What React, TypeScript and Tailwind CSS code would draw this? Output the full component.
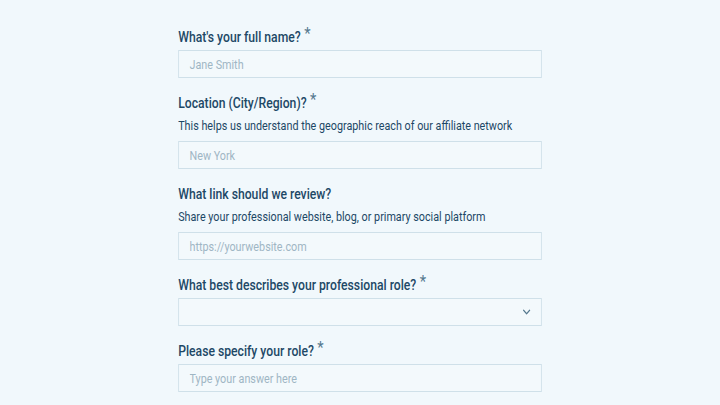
import { useState } from "react";

type Field = {
  id: string;
  label: string;
  required: boolean;
  hint?: string;
  placeholder?: string;
  kind: "text" | "select";
};

const fields: Field[] = [
  { id: "name", label: "What's your full name?", required: true, placeholder: "Jane Smith", kind: "text" },
  {
    id: "location",
    label: "Location (City/Region)?",
    required: true,
    hint: "This helps us understand the geographic reach of our affiliate network",
    placeholder: "New York",
    kind: "text",
  },
  {
    id: "link",
    label: "What link should we review?",
    required: false,
    hint: "Share your professional website, blog, or primary social platform",
    placeholder: "https://yourwebsite.com",
    kind: "text",
  },
  { id: "role", label: "What best describes your professional role?", required: true, kind: "select" },
  { id: "specify", label: "Please specify your role?", required: true, placeholder: "Type your answer here", kind: "text" },
];

const App: React.FC = () => {
  const [values, setValues] = useState<Record<string, string>>({});

  return (
    <div className="h-screen w-full overflow-hidden bg-[#f1f8fc] font-['Roboto','Liberation_Sans',sans-serif] text-[#1d4866]">
      {/* the form text is drawn condensed, so squeeze the column horizontally */}
      <div className="mx-auto w-[418px] origin-top scale-x-[0.87] pt-[28px]">
        {fields.map((f) => (
          <div key={f.id} className="mb-[16px]">
            <label htmlFor={f.id} className="flex items-start text-[14px] font-medium leading-[18px]">
              {f.label}
              {f.required && <span className="ml-[4px] -mt-[4px] text-[17px] font-normal text-[#56798f]">*</span>}
            </label>
            {f.hint && <p className="mt-[5px] text-[12.4px] leading-[18px]">{f.hint}</p>}
            <div className={f.hint ? "mt-[6px]" : "mt-[4px]"}>
              {f.kind === "select" ? (
                <div className="flex h-[28px] w-full items-center justify-end border border-[#cfe0e9] bg-[#f3f9fc] pr-[9px]">
                  <svg width="15" height="14" viewBox="0 0 24 24" fill="none" stroke="#56798f" strokeWidth="2.2" strokeLinecap="round" strokeLinejoin="round">
                    <path d="M6 9l6 6 6-6" />
                  </svg>
                </div>
              ) : (
                <input
                  id={f.id}
                  type="text"
                  value={values[f.id] ?? ""}
                  onChange={(e) => setValues({ ...values, [f.id]: e.target.value })}
                  placeholder={f.placeholder}
                  className="h-[28px] w-full border border-[#cfe0e9] bg-[#f3f9fc] px-[12px] text-[12.4px] outline-none placeholder:text-[#9fb6c4]"
                />
              )}
            </div>
          </div>
        ))}
      </div>
    </div>
  );
};

export default App;
